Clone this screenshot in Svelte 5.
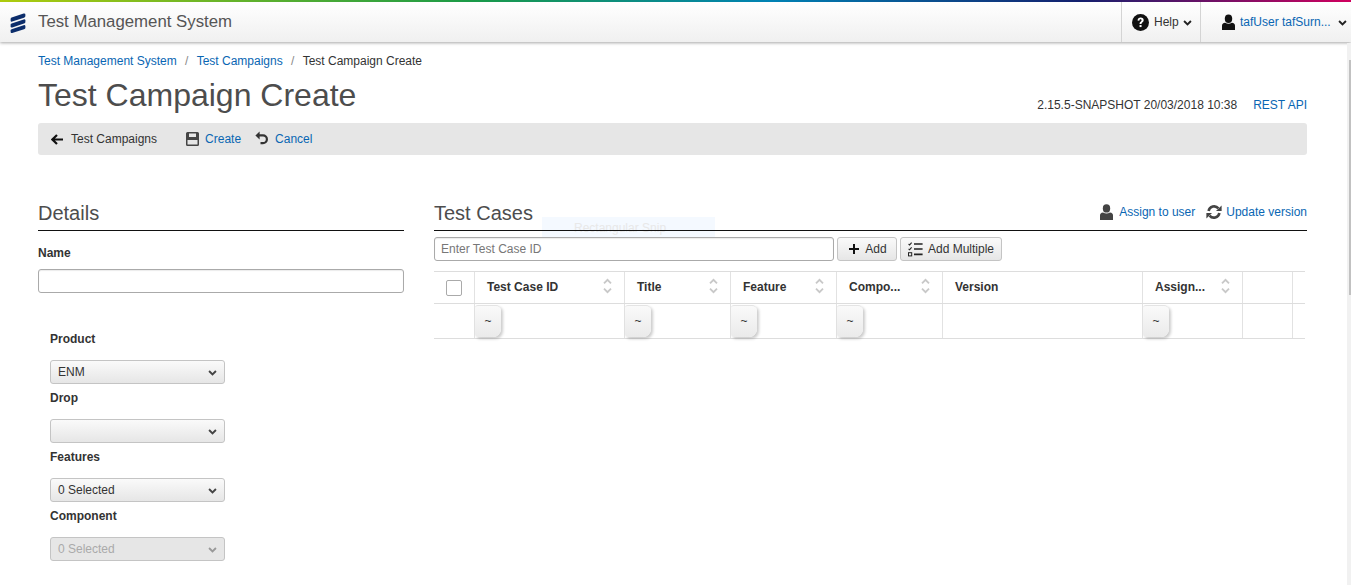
<script lang="ts">
  interface Column {
    name: string;
    width: number;
    sort: boolean;
    filter: boolean;
  }

  const columns: Column[] = [
    { name: 'Test Case ID', width: 150, sort: true, filter: true },
    { name: 'Title', width: 106, sort: true, filter: true },
    { name: 'Feature', width: 106, sort: true, filter: true },
    { name: 'Compo...', width: 106, sort: true, filter: true },
    { name: 'Version', width: 200, sort: false, filter: false },
    { name: 'Assign...', width: 100, sort: true, filter: true },
    { name: '', width: 50, sort: false, filter: false },
    { name: '', width: 13, sort: false, filter: false },
  ];

  const selects = [
    { label: 'Product', value: 'ENM', disabled: false },
    { label: 'Drop', value: '', disabled: false },
    { label: 'Features', value: '0 Selected', disabled: false },
    { label: 'Component', value: '0 Selected', disabled: true },
  ];
</script>

<header class="topbar">
  <div class="rainbow"></div>
  <div class="bar">
    <svg class="logo" viewBox="0 0 16 20" width="16" height="20">
      <path d="M1.6 4.6 L13.6 .6 Q15.4 .2 15.4 1.8 L15.4 3 Q15.4 4.2 14 4.7 L2.2 8.6 Q.6 9 .6 7.4 L.6 6 Q.6 5 1.6 4.6Z" fill="#0c2d6b" />
      <path d="M1.6 10.4 L13.6 6.4 Q15.4 6 15.4 7.6 L15.4 9 Q15.4 10 14 10.5 L2.2 14.4 Q.6 14.8 .6 13.2 L.6 11.8 Q.6 10.8 1.6 10.4Z" fill="#0c2d6b" />
      <path d="M1.6 16.2 L13.6 12.2 Q15.4 11.8 15.4 13.4 L15.4 14.8 Q15.4 15.8 14 16.3 L2.2 20 Q.6 20.4 .6 18.8 L.6 17.6 Q.6 16.6 1.6 16.2Z" fill="#0c2d6b" />
    </svg>
    <span class="app-name">Test Management System</span>
    <div class="nav-item help">
      <svg viewBox="0 0 16 16" width="17" height="17">
        <circle cx="8" cy="8" r="8" fill="#111" />
        <path d="M5.2 6.2 C5.3 4.4 6.5 3.4 8.2 3.4 C9.9 3.4 11 4.4 11 5.8 C11 7.8 8.9 7.8 8.9 9.5 L7.1 9.5 C7.1 7.1 9 7.2 9 5.9 C9 5.3 8.6 5 8 5 C7.4 5 7 5.4 6.9 6.3 Z" fill="#fff" />
        <rect x="7.1" y="10.4" width="1.9" height="1.9" fill="#fff" />
      </svg>
      <span>Help</span>
      <svg class="chev" viewBox="0 0 10 7" width="9" height="6"><path d="M1 1.2 L5 5.2 L9 1.2" fill="none" stroke="#222" stroke-width="2.2" /></svg>
    </div>
    <div class="nav-item user">
      <svg viewBox="0 0 14 17" width="13" height="16">
        <ellipse cx="7" cy="5" rx="4" ry="4.6" fill="#111" />
        <path d="M0 17 L0 12.5 Q0 9.6 3.4 9.2 Q7 11.4 10.6 9.2 Q14 9.6 14 12.5 L14 17 Z" fill="#111" />
      </svg>
      <span class="user-name">tafUser tafSurn...</span>
      <svg class="chev" viewBox="0 0 10 7" width="9" height="6"><path d="M1 1.2 L5 5.2 L9 1.2" fill="none" stroke="#222" stroke-width="2.2" /></svg>
    </div>
  </div>
</header>

<main class="page">
  <nav class="crumbs">
    <a href="#a">Test Management System</a>
    <span class="sep">/</span>
    <a href="#b">Test Campaigns</a>
    <span class="sep">/</span>
    <span>Test Campaign Create</span>
  </nav>

  <div class="title-row">
    <h1>Test Campaign Create</h1>
    <div class="meta">
      <span>2.15.5-SNAPSHOT 20/03/2018 10:38</span>
      <a href="#c">REST API</a>
    </div>
  </div>

  <div class="toolbar">
    <svg class="back" viewBox="0 0 12 11" width="12" height="11"><path d="M12 5.5 L2 5.5 M6 1 L1.4 5.5 L6 10" fill="none" stroke="#111" stroke-width="2.2" /></svg>
    <span class="back-label">Test Campaigns</span>
    <svg class="save" viewBox="0 0 13 14" width="13" height="14">
      <path fill-rule="evenodd" d="M1.5 0 H11.5 Q13 0 13 1.5 V12.5 Q13 14 11.5 14 H1.5 Q0 14 0 12.5 V1.5 Q0 0 1.5 0Z M3 1.5 V5 H10 V1.5Z M1.5 8 V12.5 H11.5 V8Z" fill="#444" />
    </svg>
    <a href="#d">Create</a>
    <svg class="undo" viewBox="0 0 13 14" width="13" height="14">
      <path d="M3 4.4 H8 A3.9 3.9 0 0 1 8 12.2 H5.5" fill="none" stroke="#333" stroke-width="2.2" />
      <path d="M4.6 .4 V8.4 L.4 4.4 Z" fill="#333" />
    </svg>
    <a class="cancel" href="#e">Cancel</a>
  </div>

  <div class="columns">
    <section class="details">
      <h2>Details</h2>
      <label class="name-label" for="name">Name</label>
      <input id="name" class="text-input" type="text" />
      <div class="select-group">
        {#each selects as s}
          <div class="field-label">{s.label}</div>
          <div class="select" class:disabled={s.disabled}>
            <span>{s.value}</span>
            <svg viewBox="0 0 10 7" width="9" height="6"><path d="M1 1.2 L5 5.2 L9 1.2" fill="none" stroke={s.disabled ? '#999' : '#444'} stroke-width="2.2" /></svg>
          </div>
        {/each}
      </div>
    </section>

    <section class="cases">
      <div class="snip">Rectangular Snip</div>
      <div class="cases-head">
        <h2>Test Cases</h2>
        <div class="cases-actions">
          <svg viewBox="0 0 13 16" width="13" height="16">
            <ellipse cx="6.5" cy="4.4" rx="3.7" ry="4.2" fill="#444" />
            <path d="M0 16 L0 11.6 Q0 9 3 8.6 Q6.5 10.6 10 8.6 Q13 9 13 11.6 L13 16 Z" fill="#444" />
          </svg>
          <a href="#f">Assign to user</a>
          <svg class="refresh" viewBox="0 0 16 14" width="16" height="14">
            <path d="M2.6 6 A5.6 5.6 0 0 1 12.4 3.4" fill="none" stroke="#444" stroke-width="2.6" />
            <path d="M15.6 .4 V6 H10 Z" fill="#444" />
            <path d="M13.4 8 A5.6 5.6 0 0 1 3.6 10.6" fill="none" stroke="#444" stroke-width="2.6" />
            <path d="M.4 13.6 V8 H6 Z" fill="#444" />
          </svg>
          <a class="update" href="#g">Update version</a>
        </div>
      </div>

      <div class="add-row">
        <input class="text-input case-input" type="text" placeholder="Enter Test Case ID" />
        <button class="btn add">
          <svg viewBox="0 0 10 10" width="10" height="10"><path d="M5 0 V10 M0 5 H10" stroke="#111" stroke-width="2" /></svg>
          Add
        </button>
        <button class="btn multi">
          <svg viewBox="0 0 15 15" width="15" height="15">
            <path d="M.6 2 L1.6 3 L3.6 .6 M.6 6.8 L1.6 7.8 L3.6 5.4" fill="none" stroke="#222" stroke-width="1.1" />
            <rect x=".5" y="10.7" width="3.2" height="3.2" fill="none" stroke="#222" />
            <path d="M6 2 H14.6 M6 7 H14.6 M6 12.4 H14.6" stroke="#222" stroke-width="1.6" />
          </svg>
          Add Multiple
        </button>
      </div>

      <div class="table">
        <div class="row head">
          <div class="cell check"><span class="checkbox"></span></div>
          {#each columns as c}
            <div class="cell" style="width: {c.width}px">
              <span class="col-name">{c.name}</span>
              {#if c.sort}
                <svg class="sort" viewBox="0 0 9 16" width="9" height="16">
                  <path d="M1 5.4 L4.5 1.8 L8 5.4 M1 10.6 L4.5 14.2 L8 10.6" fill="none" stroke="#c8c8c8" stroke-width="1.8" />
                </svg>
              {/if}
            </div>
          {/each}
        </div>
        <div class="row filters">
          <div class="cell check"></div>
          {#each columns as c}
            <div class="cell" style="width: {c.width}px">
              {#if c.filter}<span class="tilde">~</span>{/if}
            </div>
          {/each}
        </div>
      </div>
    </section>
  </div>
</main>

<div class="scrollbar"><div class="thumb"></div></div>

<style>
  :global(body) {
    font-family: "Liberation Sans", Arial, sans-serif;
    font-size: 12px;
    color: #333;
    background: #fff;
    overflow: hidden;
  }
  a {
    color: #0966b3;
    text-decoration: none;
  }
  h1, h2 {
    margin: 0;
    font-weight: 400;
    color: #4d4d4d;
  }
  .topbar {
    box-shadow: 0 1px 3px rgba(0, 0, 0, 0.35);
    position: relative;
  }
  .rainbow {
    height: 2px;
    background: linear-gradient(90deg, #aecb0d 0%, #1a9a48 35%, #0082b4 57%, #14206e 80%, #d0005e 100%);
  }
  .bar {
    height: 40px;
    display: flex;
    align-items: center;
    background: linear-gradient(#fff, #f0f0f0);
  }
  .logo {
    margin-left: 10px;
    margin-top: 1px;
  }
  .app-name {
    margin-left: 12px;
    font-size: 16.8px;
    color: #555;
    flex: 1;
  }
  .nav-item {
    height: 40px;
    display: flex;
    align-items: center;
    border-left: 1px solid #d4d4d4;
    box-sizing: border-box;
  }
  .help {
    width: 79px;
    padding-left: 10px;
    gap: 5px;
    color: #333;
  }
  .help .chev {
    margin-left: -1px;
    margin-top: 1px;
  }
  .user {
    width: 151px;
    padding-left: 21px;
  }
  .user-name {
    color: #0966b3;
    margin-left: 5px;
    width: 98px;
    white-space: nowrap;
  }
  .user .chev {
    margin-top: 2px;
  }
  .page {
    padding: 11px 44px 0 38px;
  }
  .crumbs {
    height: 17px;
    line-height: 17px;
    display: flex;
    align-items: center;
  }
  .sep {
    color: #888;
    margin: 0 8.3px;
  }
  .title-row {
    display: flex;
    align-items: flex-end;
    justify-content: space-between;
    height: 43px;
    margin-top: 2px;
  }
  h1 {
    font-size: 32px;
    line-height: 42px;
    margin-bottom: -1px;
  }
  .meta {
    display: flex;
    gap: 16px;
    margin-bottom: 3px;
    line-height: 14px;
  }
  .toolbar {
    margin-top: 8px;
    height: 32px;
    background: #e6e6e6;
    border-radius: 3px;
    display: flex;
    align-items: center;
    padding-left: 13px;
  }
  .back-label {
    margin-left: 8px;
  }
  .save {
    margin-left: 29px;
  }
  .toolbar a {
    margin-left: 6px;
  }
  .toolbar a.cancel {
    margin-left: 7px;
  }
  .undo {
    margin-left: 14px;
    margin-top: -2px;
  }
  .columns {
    display: flex;
    gap: 30px;
    margin-top: 47px;
  }
  .details {
    width: 366px;
    flex: none;
  }
  h2 {
    font-size: 20px;
    line-height: 23px;
  }
  .details h2 {
    border-bottom: 1px solid #111;
    padding-bottom: 5px;
  }
  .name-label {
    display: block;
    font-weight: 700;
    margin-top: 15px;
    line-height: 14px;
  }
  .text-input {
    display: block;
    box-sizing: border-box;
    width: 100%;
    height: 24px;
    margin: 0;
    border: 1px solid #aaa;
    border-radius: 3px;
    padding: 0 6px;
    font: inherit;
    color: #333;
    outline: none;
    box-shadow: inset 0 1px 1px rgba(0, 0, 0, 0.08);
  }
  .text-input::placeholder {
    color: #777;
    opacity: 1;
  }
  .details .text-input {
    margin-top: 9px;
  }
  .select-group {
    padding-left: 12px;
    margin-top: 39px;
  }
  .field-label {
    font-weight: 700;
    line-height: 14px;
    height: 14px;
    margin-bottom: 14px;
  }
  .select {
    box-sizing: border-box;
    width: 175px;
    height: 24px;
    margin-bottom: 7px;
    padding: 0 7px 0 7px;
    border: 1px solid #c4c4c4;
    border-radius: 3px;
    background: linear-gradient(#fafafa, #e6e6e6);
    display: flex;
    align-items: center;
    justify-content: space-between;
  }
  .select svg {
    margin-top: 1px;
  }
  .select.disabled {
    background: #e6e6e6;
    color: #aaa;
  }
  .cases {
    flex: 1;
    min-width: 0;
    position: relative;
  }
  .cases-head {
    display: flex;
    align-items: flex-start;
    justify-content: space-between;
    border-bottom: 1px solid #111;
    padding-bottom: 5px;
    height: 23px;
    position: relative;
  }
  .cases-actions {
    display: flex;
    align-items: center;
    height: 18px;
    margin-top: 1px;
  }
  .cases-actions a {
    margin-left: 6px;
  }
  .cases-actions a.update {
    margin-left: 4px;
  }
  .refresh {
    margin-left: 11px;
  }
  .snip {
    position: absolute;
    left: 108px;
    top: 15px;
    box-sizing: border-box;
    width: 173px;
    height: 20px;
    padding-left: 32px;
    line-height: 22px;
    white-space: nowrap;
    color: #e8e8e8;
    background: rgba(240, 247, 255, 0.7);
  }
  .add-row {
    display: flex;
    margin-top: 6px;
    height: 24px;
    position: relative;
  }
  .case-input {
    width: 400px;
  }
  .btn {
    box-sizing: border-box;
    height: 24px;
    margin-left: 3px;
    padding: 0;
    border: 1px solid #c4c4c4;
    border-radius: 3px;
    background: linear-gradient(#fafafa, #e6e6e6);
    font: inherit;
    color: #333;
    display: flex;
    align-items: center;
    justify-content: center;
    gap: 5px;
  }
  .btn.add {
    width: 60px;
    gap: 6px;
    padding-left: 2px;
  }
  .btn.multi {
    width: 102px;
  }
  .table {
    margin-top: 10px;
    width: 871px;
    border-top: 1px solid #ddd;
  }
  .row {
    display: flex;
    border-bottom: 1px solid #ddd;
  }
  .row.head {
    height: 31px;
  }
  .row.filters {
    height: 34px;
  }
  .cell {
    box-sizing: border-box;
    flex: none;
    border-left: 1px solid #e2e2e2;
    display: flex;
    align-items: center;
    position: relative;
  }
  .cell.check {
    width: 40px;
    border-left: none;
    justify-content: center;
  }
  .checkbox {
    width: 14px;
    height: 14px;
    border: 1px solid #aaa;
    border-radius: 2px;
  }
  .col-name {
    font-weight: 700;
    padding-left: 12px;
    padding-bottom: 1px;
    white-space: nowrap;
  }
  .sort {
    position: absolute;
    right: 12px;
    top: 6px;
  }
  .tilde {
    box-sizing: border-box;
    width: 26px;
    height: 32px;
    align-self: flex-start;
    margin-top: 1px;
    padding-bottom: 2px;
    display: flex;
    align-items: center;
    justify-content: center;
    font-size: 12px;
    background: linear-gradient(#fafafa, #eaeaea);
    border-top: 1px solid #e4e4e4;
    border-radius: 3px 5px 8px 3px;
    box-shadow: 2px 2px 3px rgba(0, 0, 0, 0.2);
  }
  .scrollbar {
    position: fixed;
    top: 43px;
    right: 0;
    bottom: 0;
    width: 4px;
    background: #f1f1f1;
  }
  .thumb {
    margin: 17px 0 0 2px;
    width: 2px;
    height: 235px;
    background: #c1c1c1;
  }
</style>
